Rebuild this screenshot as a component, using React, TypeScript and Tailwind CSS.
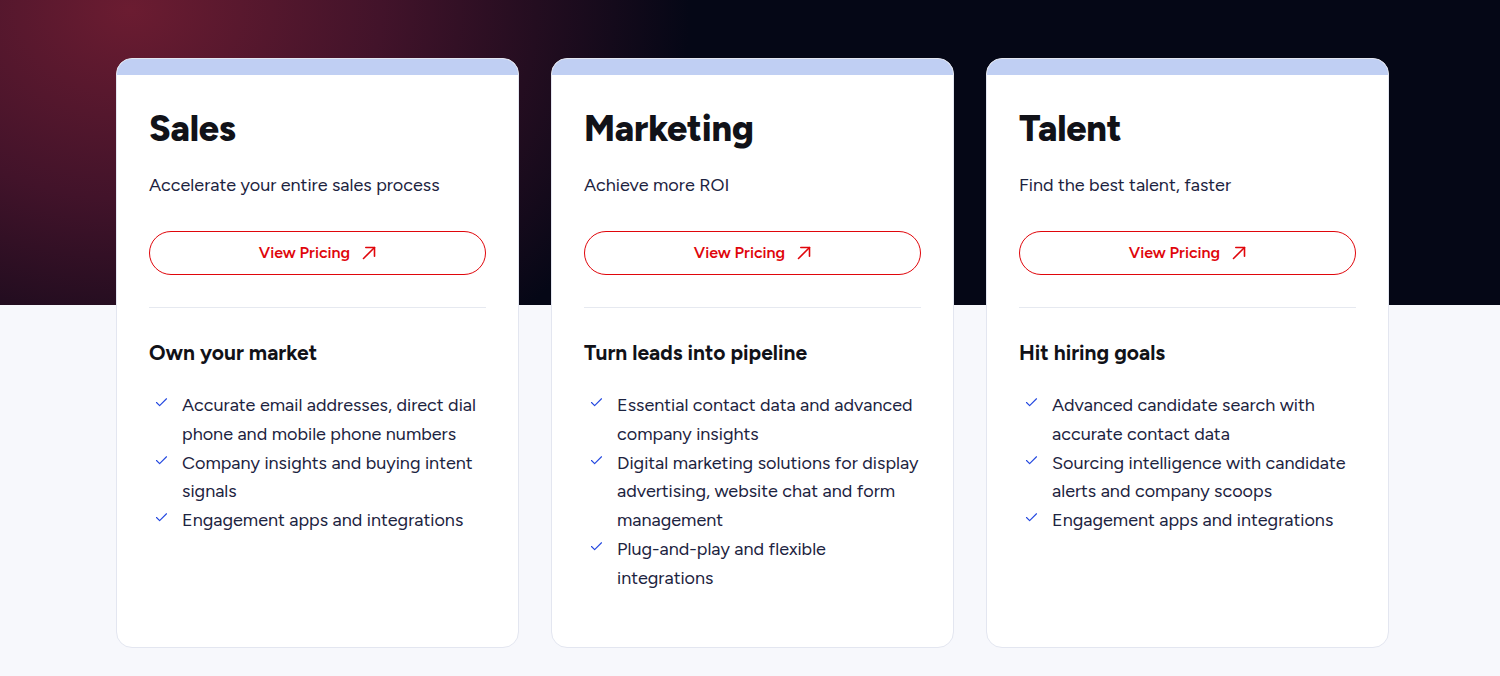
import { Check } from "lucide-react";

interface Plan {
  title: string;
  subtitle: string;
  heading: string;
  features: string[];
}

const plans: Plan[] = [
  {
    title: "Sales",
    subtitle: "Accelerate your entire sales process",
    heading: "Own your market",
    features: [
      "Accurate email addresses, direct dial phone and mobile phone numbers",
      "Company insights and buying intent signals",
      "Engagement apps and integrations",
    ],
  },
  {
    title: "Marketing",
    subtitle: "Achieve more ROI",
    heading: "Turn leads into pipeline",
    features: [
      "Essential contact data and advanced company insights",
      "Digital marketing solutions for display advertising, website chat and form management",
      "Plug-and-play and flexible integrations",
    ],
  },
  {
    title: "Talent",
    subtitle: "Find the best talent, faster",
    heading: "Hit hiring goals",
    features: [
      "Advanced candidate search with accurate contact data",
      "Sourcing intelligence with candidate alerts and company scoops",
      "Engagement apps and integrations",
    ],
  },
];

const Arrow = () => (
  <svg width="14" height="14" viewBox="0 0 14 14" fill="none" stroke="currentColor" strokeWidth="1.6" strokeLinecap="round" strokeLinejoin="round">
    <path d="M1.5 12.5 L12.5 1.5" />
    <path d="M3.8 1.5 H12.5 V10.2" />
  </svg>
);

const PlanCard = ({ plan }: { plan: Plan }) => {
  return (
    <div className="w-[403px] h-[590px] bg-white rounded-[16px] border border-[#e3e6f0] overflow-hidden flex flex-col">
      <div className="h-[16px] bg-[#c0cff3] shrink-0" />
      <div className="px-[32px] pt-[32px]">
        <h2 className="text-[36px] leading-[44px] font-extrabold text-[#111218] tracking-[-0.2px]">
          {plan.title}
        </h2>
        <p className="mt-[22px] text-[18px] leading-[24px] text-[#1c2340]">{plan.subtitle}</p>
        <button className="mt-[34px] w-full h-[44px] rounded-full border-[1.5px] border-[#e0060b] flex items-center justify-center gap-[12px] text-[#e0060b] text-[16px] font-semibold">
          View Pricing
          <Arrow />
        </button>
        <div className="mt-[32px] h-px bg-[#e6e9f0]" />
        <h3 className="mt-[32px] text-[21px] leading-[26px] font-bold text-[#111218]">
          {plan.heading}
        </h3>
        <ul className="mt-[25px]">
          {plan.features.map((f) => (
            <li key={f} className="flex gap-[13px] text-[18px] leading-[28.75px] text-[#1c2340]">
              <Check size={15} strokeWidth={1.8} className="text-[#2348e0] mt-[4px] ml-[5px] shrink-0" />
              <span>{f}</span>
            </li>
          ))}
        </ul>
      </div>
    </div>
  );
};

export default function App() {
  return (
    <div
      className="relative w-[1500px] h-[676px] overflow-hidden bg-[#f7f8fc]"
      style={{ fontFamily: "Figtree, Inter, 'Noto Sans', sans-serif" }}
    >
      <div className="absolute inset-x-0 top-0 h-[305px] bg-[#050716]">
        <div className="absolute inset-0 bg-[radial-gradient(ellipse_560px_420px_at_130px_10px,#6b1c31_0%,#42132a_45%,#050716_100%)]" />
      </div>
      <div className="relative flex gap-[32px] pt-[58px] pl-[116px]">
        {plans.map((p) => (
          <PlanCard key={p.title} plan={p} />
        ))}
      </div>
    </div>
  );
}
